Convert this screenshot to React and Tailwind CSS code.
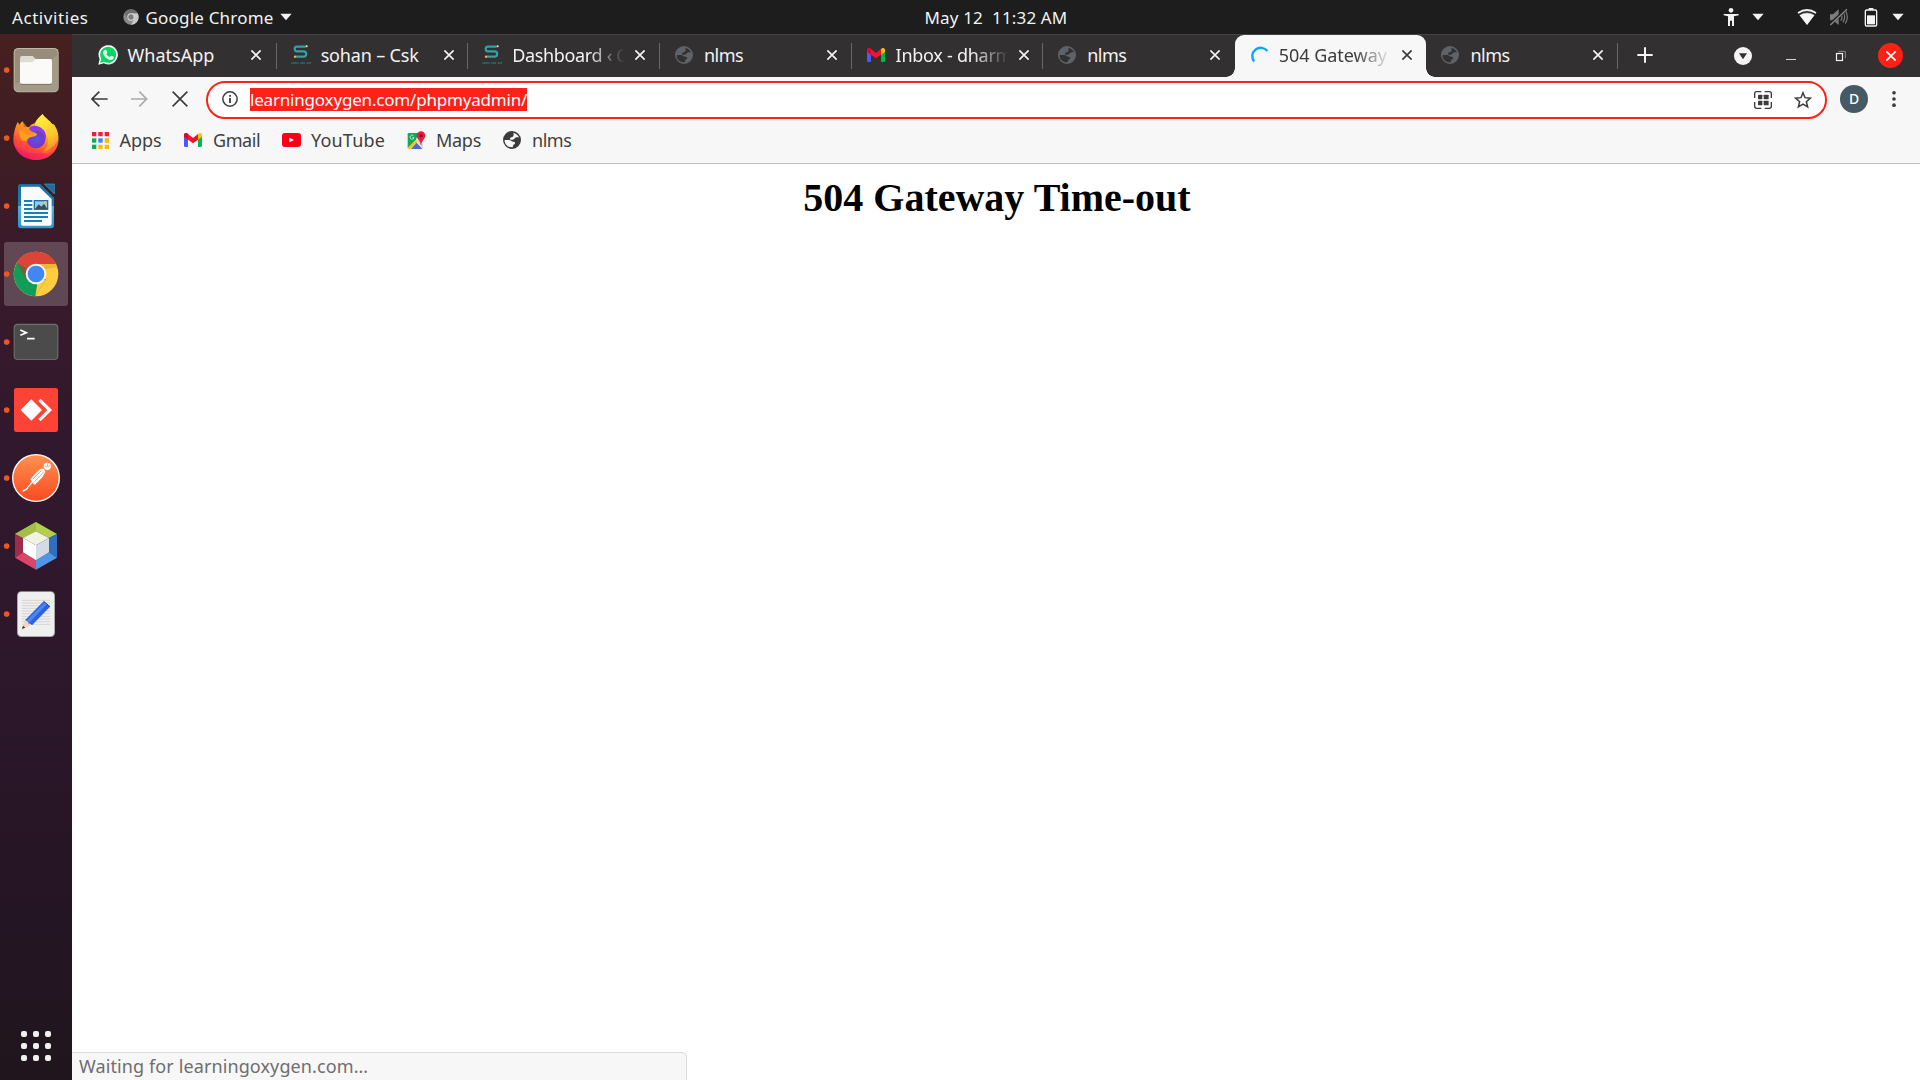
const UI_FONT = "font-['Noto_Sans','Noto_Sans_CJK_SC',sans-serif]";

/* Small drawing helper: three drawing units per screen pixel. */
function Glyph({ box, className = "", children }) {
  const [x, y, w, h] = box;
  return (
    <svg width={w / 3} height={h / 3} viewBox={`${x} ${y} ${w} ${h}`} className={`block shrink-0 ${className}`}>
      {children}
    </svg>
  );
}

const Caret = ({ className }) => (
  <Glyph box={[0, 0, 36, 24]} className={className}>
    <path d="M1 2H35L18 22Z" fill="#f2f2f2" />
  </Glyph>
);

function Globe({ className }) {
  return (
    <svg viewBox="0 0 54 54" className={`block h-[18px] w-[18px] shrink-0 ${className}`} fill="currentColor">
      <path
        fillRule="evenodd"
        d="M27 0a27 27 0 1 0 0 54a27 27 0 0 0 0-54ZM31 5C39 7 45 12 48 19L40 19C35 20 35 25 30 26H22C19 23 22 19 27 19C32 17 33 11 31 5ZM5 27H18C24 27 25 32 31 32C38 32 38 40 31 41L29 49C15 50 4 40 5 27Z"
      />
    </svg>
  );
}

function WhatsApp() {
  return (
    <svg viewBox="0 0 60 60" className="block h-5 w-5">
      <path d="M1 59L5 43A29 29 0 1 1 17 55Z" fill="#fff" />
      <path d="M6 54L10 42A24 24 0 1 1 18 50Z" fill="#00d95f" />
      <path
        d="M20 15c2-1 4-1 5 1l3 6c0 2-2 3-3 5c2 4 5 7 10 9c2-1 3-4 5-4l6 3c2 1 1 4 0 6c-3 4-8 4-12 3c-9-3-15-9-18-16c-2-5 0-10 4-13Z"
        fill="#fff"
      />
    </svg>
  );
}

function SchoolLogo() {
  return (
    <svg viewBox="0 0 60 60" className="block h-5 w-5">
      <path d="M44 5H18c-9 0-9 14 0 14h20c10 0 10 16 0 16H14" fill="none" stroke="#2fa3a8" strokeWidth="6.5" />
      <circle cx="47" cy="4" r="3" fill="#f6e9c2" />
      <circle cx="12" cy="35" r="3.5" fill="#f3b53f" />
      <path d="M1 54h22M28 54h14M47 54h13" stroke="#26777c" strokeWidth="5" strokeDasharray="4 1" />
    </svg>
  );
}

function Gmail() {
  return (
    <svg viewBox="0 0 54 42" className="block h-[14px] w-[18px]">
      <path d="M0 8V38q0 4 4 4h8V16Z" fill="#4a5cf5" />
      <path d="M54 8V38q0 4-4 4h-8V16Z" fill="#00b84c" />
      <path d="M42 5v15L54 11V7C54 0 47-2 42 3Z" fill="#ffc107" />
      <path d="M0 11V7C0 0 7-2 12 3l15 12L42 3v17L27 31L12 20Z" fill="#f8112c" />
      <path d="M0 7C0 0 7-2 12 3v17L0 11Z" fill="#d50a35" />
    </svg>
  );
}

const Spinner = () => (
  <svg viewBox="0 0 60 60" className="block h-5 w-5">
    <path d="M14 51A26 26 0 1 1 56 18" transform="translate(2 1) scale(.95)" fill="none" stroke="#03a9f4" strokeWidth="7.5" />
  </svg>
);

const Cross = ({ className }) => (
  <svg viewBox="0 0 30 30" className={`block h-[10px] w-[10px] shrink-0 ${className}`}>
    <path d="M1 1L29 29M29 1L1 29" stroke="currentColor" strokeWidth="5" />
  </svg>
);

const DimGlobe = () => <Globe className="text-[#5f6368]" />;

const tabs = [
  { icon: <WhatsApp />, label: "WhatsApp", track: "tracking-[0.03px]", pad: "pl-[10.5px]", sep: true },
  { icon: <SchoolLogo />, label: "sohan – Csk", track: "tracking-[-0.17px]", sep: true },
  { icon: <SchoolLogo />, label: "Dashboard ‹ C", track: "tracking-[-0.35px]", sep: true, fade: true },
  { icon: <DimGlobe />, label: "nlms", track: "tracking-[-0.5px]", sep: true },
  { icon: <Gmail />, label: "Inbox - dharm", track: "tracking-[-0.27px]", sep: true, fade: true },
  { icon: <DimGlobe />, label: "nlms", track: "tracking-[-0.5px]" },
  { icon: <Spinner />, label: "504 Gateway", track: "tracking-[-0.04px]", active: true, fade: true },
  { icon: <DimGlobe />, label: "nlms", track: "tracking-[-0.5px]", sep: true },
];

function Tab({ icon, label, track, sep, active, fade, pad = "pl-3" }) {
  return (
    <div
      className={`relative flex h-full w-[191.65px] shrink-0 items-center pb-[2px] ${pad} ${
        active ? "-mt-px h-[43px] rounded-t-[9px] bg-[#f7f7f7] pt-px text-[#3c3c3c]" : "text-[#f3f3f3]"
      }`}
    >
      {active && (
        <>
          <span className="absolute bottom-0 -left-[9px] h-[9px] w-[9px] bg-[radial-gradient(circle_at_0_0,#333031_8.5px,#f7f7f7_9px)]" />
          <span className="absolute -right-[9px] bottom-0 h-[9px] w-[9px] bg-[radial-gradient(circle_at_100%_0,#333031_8.5px,#f7f7f7_9px)]" />
        </>
      )}
      <span className="flex w-6 shrink-0 justify-center">{icon}</span>
      <span
        className={`ml-2 w-[120px] shrink-0 text-[18px] leading-7 whitespace-nowrap ${track} ${
          fade ? "[mask-image:linear-gradient(to_right,#000_76px,transparent_113px)]" : ""
        }`}
      >
        {label}
      </span>
      <Cross className="ml-[3px]" />
      {sep && <span className="absolute top-2 right-0 h-[26px] w-px bg-[#68666a]" />}
    </div>
  );
}

function TopBar() {
  return (
    <header className="grid h-[34px] grid-cols-[1fr_auto_1fr] items-center bg-[#1d1d1d] text-[17px] leading-none text-[#f2f2f2]">
      <div className="flex items-center pl-3">
        <span className="tracking-[0.57px]">Activities</span>
        <svg viewBox="0 0 48 48" className="ml-[34px] h-4 w-4">
          <circle cx="24" cy="24" r="23" fill="#8b8b8b" />
          <path d="M24 13H44A23 23 0 0 1 24 47L34 29Z" fill="#c9c9c9" />
          <path d="M4 13A23 23 0 0 1 44 13H24L14 29Z" fill="#6f6f6f" />
          <circle cx="24" cy="24" r="11" fill="#dcdcdc" />
          <circle cx="24" cy="24" r="8" fill="#7b7b7b" />
        </svg>
        <span className="ml-[7px] tracking-[0.19px]">Google Chrome</span>
        <Caret className="ml-[6px]" />
      </div>
      <span className="ml-[72px] whitespace-pre tracking-[0.15px]">May 12  11:32 AM</span>
      <div className="flex items-center justify-end pr-4">
        <Glyph box={[909, 21, 48, 60]}>
          <circle cx="933" cy="31" r="7" fill="#f2f2f2" />
          <path d="M911 42H956V46L942 49V78H936V62H930V78H924V49L911 46Z" fill="#f2f2f2" />
        </Glyph>
        <Caret className="ml-[13px]" />
        <Glyph box={[1131, 21, 60, 60]} className="ml-[33px]">
          <path d="M1134 39Q1161 20 1188 39L1161 73Z" fill="#8b8b8b" />
          <path d="M1134 39Q1161 20 1188 39" fill="none" stroke="#f2f2f2" strokeWidth="5" />
          <path d="M1135 39L1161 73L1187 39" fill="none" stroke="#9a9a9a" strokeWidth="2" />
          <path d="M1139 46Q1161 34 1183 46L1161 75Z" fill="#f5f5f5" />
          <path d="M1137 43Q1161 28 1185 43" fill="none" stroke="#1d1d1d" strokeWidth="4" />
        </Glyph>
        <Glyph box={[1227, 21, 60, 60]} className="ml-3">
          <path d="M1230 43H1239L1256 28V75L1239 61H1230Z" fill="#7d7d7d" />
          <path d="M1262 42Q1270 51 1262 62M1269 36Q1279 51 1269 67M1276 31Q1288 51 1276 71" fill="none" stroke="#7d7d7d" strokeWidth="3.5" />
          <path d="M1229 74L1280 27" stroke="#1d1d1d" strokeWidth="9" />
          <path d="M1231 75L1281 28" stroke="#8a8a8a" strokeWidth="4" />
        </Glyph>
        <Glyph box={[1332, 18, 42, 63]} className="ml-[15px]">
          <path d="M1346 21H1360V27H1346Z" fill="#f2f2f2" />
          <rect x="1336" y="27" width="34" height="48" rx="4" fill="none" stroke="#f2f2f2" strokeWidth="4" />
          <path d="M1341 43H1365V70H1341Z" fill="#f2f2f2" />
        </Glyph>
        <Caret className="ml-[14px]" />
      </div>
    </header>
  );
}

const dockIcons = [
  /* Files */
  <g key="files" transform="translate(0 -18)">
    <rect x="41" y="54" width="135" height="133" rx="14" fill="#c0b8a6" />
    <rect x="44" y="57" width="129" height="127" rx="12" fill="#978d7a" />
    <path d="M44 165L173 75V172Q173 184 161 184H56Q44 184 44 172Z" fill="#a39a88" />
    <path d="M60 84Q60 78 66 78H98L107 87H150Q156 87 156 94V108H60Z" fill="#dfdbd0" />
    <path d="M60 97H96L107 87H150Q156 87 156 94V155Q156 162 149 162H67Q60 162 60 155Z" fill="#fbfaf8" />
    <path d="M62 163H154" stroke="#776e5e" strokeWidth="2.5" />
  </g>,
  /* Firefox */
  <g key="firefox" transform="translate(30 18)">
    <path
      d="M98 12C104 24 118 30 126 42C130 42 133 43 134 46C144 62 147 78 145 95C141 128 112 150 78 150C40 150 11 122 10 90C10 70 16 50 23 36L28 47C30 41 34 36 38 34L42 51C48 49 53 50 57 52C61 45 68 41 74 40C80 28 90 22 98 12Z"
      fill="url(#foxBody)"
    />
    <path d="M98 12C104 24 118 30 126 42C142 60 149 84 137 110C128 128 112 134 96 128C112 118 118 100 112 82C106 66 90 58 80 54C70 46 76 30 98 12Z" fill="url(#foxFlame)" />
    <circle cx="78" cy="87" r="28" fill="url(#foxGlobe)" />
    <path d="M57 54C66 44 88 46 98 58C110 68 110 84 104 94C106 78 98 66 84 64L60 62Z" fill="#8a3df0" />
    <path d="M28 64C38 58 48 60 56 65C64 63 74 66 81 72C80 79 68 80 62 82C56 84 52 88 52 92C40 96 32 90 30 80Z" fill="#ff9f22" />
    <path d="M30 62L23 36L40 56L38 34L57 60L81 72C66 72 60 76 52 76Z" fill="#ff8a1d" opacity=".75" />
    <path d="M10 90C12 116 46 132 78 130C108 128 132 114 145 88C144 126 112 150 78 150C40 150 11 122 10 90Z" fill="#f6135f" opacity=".4" />
  </g>,
  /* Writer */
  <g key="writer" transform="translate(0 -426)">
    <path d="M62 462H121L162 503V586Q162 595 153 595H63Q54 595 54 586V470Q54 462 62 462Z" fill="url(#writer)" />
    <path d="M133 462H163V492Z" fill="#1d6c9c" stroke="#3b9fce" strokeWidth="2" />
    <path d="M65 470H117L155 507V581Q155 587 149 587H69Q63 587 63 581V472Z" fill="#fbfbfb" />
    <path d="M72 513H97M72 525H97M72 537H97M72 549H144M72 561H144M72 573H126" stroke="#1b7fb5" strokeWidth="6" />
    <rect x="103" y="512" width="40" height="26" fill="#8fd0f0" stroke="#1874a8" strokeWidth="4" />
    <path d="M105 537L116 523L124 530L132 521L142 537Z" fill="#444b52" />
    <circle cx="136" cy="518" r="4" fill="#f6c948" />
  </g>,
  /* Chrome */
  <g key="chrome" transform="translate(0 -30)">
    <circle cx="108" cy="132" r="67" fill="#ffcd40" />
    <path d="M51 98A67 67 0 0 0 106 199L138 148L108 132Z" fill="#109d58" />
    <path d="M51 97A67 67 0 0 1 168 102H108L78 148Z" fill="#db4437" />
    <path d="M108 102H168L172 112L136 118Z" fill="#e0a52a" opacity=".55" />
    <path d="M51 98L78 148L88 120Z" fill="#0a7a43" opacity=".45" />
    <path d="M106 199L138 148L112 160Z" fill="#ffcd40" />
    <circle cx="108" cy="132" r="31" fill="#f4f4f4" />
    <circle cx="108" cy="132" r="25" fill="#4285f4" />
  </g>,
  /* Terminal */
  <g key="terminal" transform="translate(0 -234)">
    <rect x="41" y="281" width="134" height="109" rx="12" fill="#707070" />
    <rect x="44" y="285" width="128" height="103" rx="10" fill="#4b4b4b" />
    <path d="M61 300L79 308L61 316M81 326H104" fill="none" stroke="#fff" strokeWidth="5" />
  </g>,
  /* AnyDesk */
  <g key="anydesk" transform="translate(0 -438)">
    <rect x="42" y="474" width="132" height="132" rx="7" fill="#fd4236" />
    <path d="M94 508L126 540L94 572L62 540Z" fill="#fff" />
    <path d="M115 513L122 506L156 540L122 574L115 567L142 540Z" fill="#fff" />
  </g>,
  /* Postman */
  <g key="postman" transform="translate(0 -12)">
    <circle cx="108" cy="114" r="72" fill="#fff" />
    <circle cx="108" cy="114" r="68" fill="url(#postman)" />
    <circle cx="142" cy="79" r="11" fill="#fff" />
    <path d="M134 78Q143 83 152 76M144 68L142 79" stroke="#ff7a3c" strokeWidth="2" fill="none" />
    <path d="M122 86L131 86L136 95L127 112L105 134L98 130L80 150L68 156V150L78 146L96 124L90 119L104 103Z" fill="#fff" />
    <path d="M98 118L124 92M104 124L131 96M84 144L100 127" stroke="#ff7a3c" strokeWidth="2.2" fill="none" />
  </g>,
  /* NetBeans */
  <g key="netbeans" transform="translate(0 -216)">
    <path d="M108 246L171 282L147 294L108 274L69 294L45 282Z" fill="#b3cf4d" />
    <path d="M108 246V274L69 294L45 282Z" fill="#a4bd45" />
    <path d="M45 282L69 294V337L45 353Z" fill="#9e2a4c" />
    <path d="M171 282L147 294V337L171 353Z" fill="#2f6fc0" />
    <path d="M45 353L69 337L108 361V389Z" fill="#dc4468" />
    <path d="M171 353L147 337L108 361V389Z" fill="#4f97e6" />
    <path d="M108 274L147 294L108 316L69 294Z" fill="#f0f3e2" />
    <path d="M69 294L108 316V361L69 337Z" fill="#fff" />
    <path d="M147 294L108 316V361L147 337Z" fill="#d3dce6" />
  </g>,
  /* Text editor */
  <g key="editor" transform="translate(0 -420)">
    <rect x="51" y="454" width="114" height="137" rx="13" fill="#a9a9a9" />
    <rect x="54" y="456" width="108" height="132" rx="11" fill="#efefef" />
    <path d="M66 481H150M66 489H150M66 497H150M66 505H150M66 513H150M66 521H150M66 529H150M66 537H150M66 545H150M66 553H150" stroke="#c9c9c9" strokeWidth="2.2" />
    <path d="M66 567L75 541L93 556Z" fill="#f6d3b4" />
    <path d="M66 567L69 557L76 563Z" fill="#333" />
    <path d="M75 541L131 484L150 500L96 556Q92 550 86 551Q86 544 75 541Z" fill="#2b61dd" />
    <path d="M81 541L134 487L141 492L88 548Z" fill="#4c86f2" />
    <path d="M131 484L150 500" stroke="#1e47ae" strokeWidth="3" />
  </g>,
];

function Dock() {
  return (
    <aside className="flex w-[72px] shrink-0 flex-col bg-[linear-gradient(to_bottom,#47201f_0%,#3b1b28_18%,#32182e_38%,#2d172b_60%,#241524_85%,#20151c_100%)]">
      <svg width="0" height="0" className="absolute">
        <defs>
          <linearGradient id="foxBody" x1=".8" y1="0" x2=".3" y2="1">
            <stop offset="0" stopColor="#ffe226" />
            <stop offset=".45" stopColor="#ff9a1e" />
            <stop offset=".75" stopColor="#ff4a3a" />
            <stop offset="1" stopColor="#f01e6a" />
          </linearGradient>
          <linearGradient id="foxFlame" x1=".3" y1="0" x2=".6" y2="1">
            <stop offset="0" stopColor="#fff14a" />
            <stop offset=".6" stopColor="#ffc62a" />
            <stop offset="1" stopColor="#ff8a25" />
          </linearGradient>
          <radialGradient id="foxGlobe">
            <stop offset="0" stopColor="#5a55e0" />
            <stop offset="1" stopColor="#7a34c8" />
          </radialGradient>
          <linearGradient id="writer" x1="0" y1="0" x2="0" y2="1">
            <stop offset="0" stopColor="#1c6f9f" />
            <stop offset=".5" stopColor="#1c7db2" />
            <stop offset=".5" stopColor="#4fb0de" />
            <stop offset="1" stopColor="#2e96cb" />
          </linearGradient>
          <linearGradient id="postman" x1="0" y1="0" x2="0" y2="1">
            <stop offset="0" stopColor="#ff9150" />
            <stop offset="1" stopColor="#fb4a22" />
          </linearGradient>
        </defs>
      </svg>
      <div className="flex flex-1 flex-col pt-[2px]">
        {dockIcons.map((icon, i) => (
          <svg key={i} viewBox="0 0 216 204" className="block h-[68px] w-[72px]">
            {i === 3 && <rect x="12" y="6" width="192" height="192" rx="9" fill="#fff" fillOpacity=".2" />}
            <circle cx="20" cy="102" r="8.5" fill="#ee5622" />
            {icon}
          </svg>
        ))}
      </div>
      <div className="mb-[19px] ml-[21px] grid w-[30px] grid-cols-3 gap-[6px]">
        {Array.from({ length: 9 }, (_, i) => (
          <span key={i} className="h-[6px] w-[6px] rounded-[2px] bg-[#f2f0ef]" />
        ))}
      </div>
    </aside>
  );
}

function TabStrip() {
  return (
    <div className="flex h-[43px] items-center border-t border-[#454344] bg-[#333031] pl-[13px]">
      {tabs.map((t, i) => (
        <Tab key={i} {...t} />
      ))}
      <Glyph box={[0, 0, 48, 48]} className="mb-[2px] ml-[19px]">
        <path d="M24 1V47M1 24H47" stroke="#f5f5f5" strokeWidth="6" />
      </Glyph>
      <Glyph box={[0, 0, 54, 54]} className="mb-px ml-[81px]">
        <circle cx="27" cy="27" r="27" fill="#f5f5f5" />
        <path d="M15 19H39L27 37Z" fill="#333031" />
      </Glyph>
      <span className="mt-[7px] ml-[34px] h-[1.5px] w-[10px] bg-[#d5d5d5]" />
      <Glyph box={[1248, 150, 36, 36]} className="ml-[39px]">
        <path d="M1258 154H1279V175" fill="none" stroke="#8e8c8d" strokeWidth="3" />
        <rect x="1252.500" y="160.500" width="18" height="21" fill="none" stroke="#f5f5f5" strokeWidth="3.500" />
      </Glyph>
      <span className="mb-px ml-[31px] flex h-[25px] w-[25px] items-center justify-center rounded-full bg-[#ff2116] text-white">
        <Cross />
      </span>
    </div>
  );
}

function Toolbar() {
  return (
    <div className="flex h-[45px] items-center bg-[#f7f7f7] text-[#3c3c3c]">
      <Glyph box={[0, 0, 51, 48]} className="mb-px ml-[19px]">
        <path d="M50 24H4M25 2L3 24L25 46" fill="none" stroke="currentColor" strokeWidth="5" />
      </Glyph>
      <Glyph box={[0, 0, 51, 48]} className="mb-px ml-[23px] text-[#aaaaaa]">
        <path d="M0 24H46M25 2L47 24L25 46" fill="none" stroke="currentColor" strokeWidth="5" />
      </Glyph>
      <Glyph box={[0, 0, 48, 48]} className="mb-px ml-[23.5px]">
        <path d="M2 2L46 46M46 2L2 46" fill="none" stroke="currentColor" strokeWidth="5" />
      </Glyph>
      <div className="ml-[18.5px] flex h-[38px] w-[1621px] items-center rounded-full border-2 border-[#fc2219] bg-white">
        <Glyph box={[0, 0, 48, 48]} className="mb-px ml-[13.500px]">
          <circle cx="24" cy="24" r="21.500" fill="none" stroke="currentColor" strokeWidth="4.500" />
          <path d="M24 12V17M24 21V36" stroke="currentColor" strokeWidth="5.500" />
        </Glyph>
        <span className="ml-[12.500px] h-[23px] w-[277px] bg-[#fc2219] text-[17px] leading-[23px] tracking-[-0.19px] whitespace-nowrap text-white">
          learningoxygen.com/phpmyadmin/
        </span>
        <span className="flex-1" />
        <Glyph box={[0, 0, 54, 54]}>
          <path d="M2 21V8Q2 2 8 2H22M32 2H46Q52 2 52 8V21M52 33V46Q52 52 46 52H32M22 52H8Q2 52 2 46V33" fill="none" stroke="currentColor" strokeWidth="4" />
          <rect x="12" y="11" width="13" height="14" rx="2" fill="currentColor" />
          <rect x="29" y="11" width="15" height="14" rx="2" fill="currentColor" />
          <rect x="12" y="29" width="13" height="14" rx="2" fill="currentColor" />
          <rect x="29" y="29" width="15" height="14" rx="2" fill="currentColor" />
        </Glyph>
        <Glyph box={[0, 0, 54, 54]} className="mr-[13.500px] ml-[22px]">
          <path d="M27 5L33 20L49 21.500L37 32L41 48L27 39.500L13 48L17 32L5 21.500L21 20Z" fill="none" stroke="currentColor" strokeWidth="4.500" />
        </Glyph>
      </div>
      <span className="mb-px ml-[13px] flex h-7 w-7 items-center justify-center rounded-full bg-[#455a64] text-[14px] leading-none font-medium text-white">
        D
      </span>
      <Glyph box={[0, 0, 12, 54]} className="mb-px ml-[23.5px]">
        <circle cx="6" cy="8.500" r="5.500" fill="currentColor" />
        <circle cx="6" cy="27" r="5.500" fill="currentColor" />
        <circle cx="6" cy="45.500" r="5.500" fill="currentColor" />
      </Glyph>
    </div>
  );
}

function AppsGrid() {
  return (
    <Glyph box={[0, 0, 51, 51]}>
      <path d="M0 0H13V13H0ZM19 0H32V13H19ZM38 0H51V13H38Z" fill="#ee1c3c" />
      <path d="M0 19H13V32H0Z" fill="#14a85a" />
      <path d="M19 19H32V32H19Z" fill="#3f7df5" />
      <path d="M38 19H51V32H38ZM19 38H32V51H19ZM38 38H51V51H38Z" fill="#fbb70f" />
      <path d="M0 38H13V51H0Z" fill="#14a85a" />
    </Glyph>
  );
}

const YouTube = () => (
  <Glyph box={[0, 0, 57, 42]}>
    <rect width="57" height="42" rx="9" fill="#fb0019" />
    <path d="M22 14L36 21L22 28Z" fill="#fff" />
  </Glyph>
);

const Maps = () => (
  <Glyph box={[0, 0, 57, 57]}>
    <path d="M2 10Q2 6 6 6H48V49Q48 54 43 54H6Q2 54 2 50Z" fill="#e9e9e9" />
    <path d="M2 10Q2 6 6 6H34L27 26L2 52Z" fill="#14a85a" />
    <path d="M2 50L26 26L32 32L10 54H6Q2 54 2 50Z" fill="#fbc116" />
    <path d="M12 54L29 35L46 54Z" fill="#4a66ee" />
    <path d="M30 30L34 26L48 42V52Z" fill="#d4d4d4" />
    <path d="M19 14A6 6 0 1 0 21 20H16" fill="none" stroke="#c9f3d9" strokeWidth="2.500" />
    <path d="M42 1A13 13 0 0 1 55 14C55 24 44 26 43 42H41C40 26 29 24 29 14A13 13 0 0 1 42 1Z" fill="#ea1f3d" />
    <circle cx="42" cy="14" r="5" fill="#8d0f24" />
  </Glyph>
);

function BookmarkBar() {
  return (
    <div className="flex h-[42px] items-center border-b border-[#bfbfbf] bg-[#f7f7f7] pb-[5px] pl-5 text-[18px] leading-none text-[#3f3f3f]">
      <AppsGrid />
      <span className="ml-[10.5px] w-[64.5px] pb-px tracking-[-0.07px]">Apps</span>
      <Gmail />
      <span className="ml-[11px] w-[69px] pb-px tracking-[-0.45px]">Gmail</span>
      <YouTube />
      <span className="ml-[10px] w-[96px] pb-px tracking-[0.18px]">YouTube</span>
      <Maps />
      <span className="ml-[10px] w-[67px] pb-px tracking-[-0.28px]">Maps</span>
      <Globe className="text-[#3c3c3c]" />
      <span className="ml-[11px] pb-px tracking-[-0.45px]">nlms</span>
    </div>
  );
}

export default function App() {
  return (
    <div className={`flex h-[1080px] w-[1920px] flex-col overflow-hidden bg-white ${UI_FONT}`}>
      <TopBar />
      <div className="flex min-h-0 flex-1">
        <Dock />
        <div className="flex min-w-0 flex-1 flex-col">
          <TabStrip />
          <Toolbar />
          <BookmarkBar />
          <main className="flex flex-1 flex-col justify-between bg-white">
            <h1 className="pt-[11px] pl-[2px] text-center font-['Liberation_Serif',serif] text-[40px] leading-[46px] font-bold text-black">
              504 Gateway Time-out
            </h1>
            <div className="h-7 w-[615px] rounded-tr-[5px] border-t border-r border-[#dcdcdc] bg-[#f7f7f7] pl-[7px] text-[18px] leading-[27px] tracking-[0.11px] text-[#6e6e6e]">
              Waiting for learningoxygen.com…
            </div>
          </main>
        </div>
      </div>
    </div>
  );
}
